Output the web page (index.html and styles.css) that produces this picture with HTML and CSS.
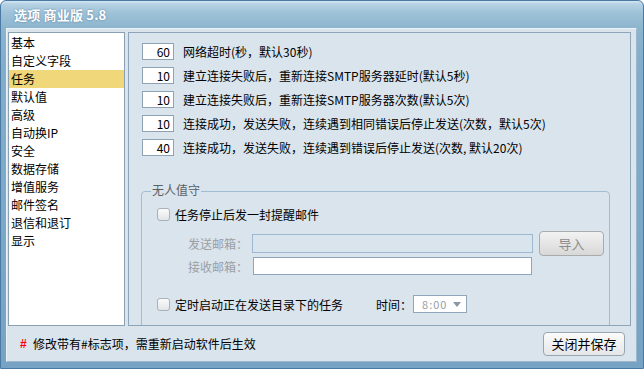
FILE: index.html
```html
<!DOCTYPE html>
<html lang="zh-CN">
<head>
<meta charset="utf-8">
<title>选项 商业版 5.8</title>
<link rel="stylesheet" href="styles.css">
</head>
<body>
<div class="window">
  <div class="titlebar"><span class="title">选项 商业版 5.8</span></div>
  <div class="client">
    <div class="main">
      <ul class="nav">
        <li>基本</li>
        <li>自定义字段</li>
        <li class="selected">任务</li>
        <li>默认值</li>
        <li>高级</li>
        <li>自动换IP</li>
        <li>安全</li>
        <li>数据存储</li>
        <li>增值服务</li>
        <li>邮件签名</li>
        <li>退信和退订</li>
        <li>显示</li>
      </ul>
      <div class="panel">
        <div class="rows">
          <div class="row"><span class="num">60</span><span class="lbl">网络超时(秒，默认30秒)</span></div>
          <div class="row"><span class="num">10</span><span class="lbl">建立连接失败后，重新连接SMTP服务器延时(默认5秒)</span></div>
          <div class="row"><span class="num">10</span><span class="lbl">建立连接失败后，重新连接SMTP服务器次数(默认5次)</span></div>
          <div class="row"><span class="num">10</span><span class="lbl">连接成功，发送失败，连续遇到相同错误后停止发送(次数，默认5次)</span></div>
          <div class="row"><span class="num">40</span><span class="lbl">连接成功，发送失败，连续遇到错误后停止发送(次数, 默认20次)</span></div>
        </div>
        <div class="group">
          <span class="group-title">无人值守</span>
          <div class="check-row"><span class="check"></span><span>任务停止后发一封提醒邮件</span></div>
          <div class="mail-grid">
            <span class="muted">发送邮箱：</span>
            <span class="field field-disabled"></span>
            <span class="btn btn-disabled">导入</span>
            <span class="muted">接收邮箱：</span>
            <span class="field field-white"></span>
            <span></span>
          </div>
          <div class="check-row check-row-2">
            <span class="check"></span><span>定时启动正在发送目录下的任务</span>
            <span class="time-label">时间：</span>
            <span class="select"><span class="select-val">8:00</span><span class="arrow"></span></span>
          </div>
        </div>
      </div>
    </div>
    <div class="footer">
      <span class="hash">#</span>
      <span class="hint">修改带有#标志项，需重新启动软件后生效</span>
      <span class="btn btn-save">关闭并保存</span>
    </div>
  </div>
</div>
</body>
</html>
```

FILE: styles.css
```css
* { box-sizing: border-box; }
html, body { margin: 0; padding: 0; background: #ffffff; }
body {
  font-family: "Noto Sans CJK SC", "Liberation Sans", sans-serif;
  font-size: 12px;
  color: #000;
}
.window {
  width: 644px;
  height: 369px;
  border: 1px solid #4a7aa4;
  border-radius: 6px 6px 0 0;
  background: linear-gradient(to bottom, #d4e6f2 0, #b6d2e4 3px, #9ec2d8 12px, #8cb5ce 27px, #82aecb 60px, #76a3c4 100%);
  padding: 0 6px 6px 5px;
  display: flex;
  flex-direction: column;
}
.titlebar {
  height: 27px;
  flex: none;
  display: flex;
  align-items: center;
  padding-left: 8px;
}
.title {
  color: #ffffff;
  font-weight: bold;
  font-size: 13px;
  letter-spacing: 0.2px;
  text-shadow: 0 0 2px rgba(40, 80, 120, 0.6);
}
.client {
  flex: 1;
  background: #dae4ed;
  border-left: 1px solid #eef3f8;
  border-top: 1px solid #eef3f8;
  border-right: 1px solid #9db6cb;
  border-bottom: 1px solid #9db6cb;
  padding: 3px 5px 0 1px;
  display: flex;
  flex-direction: column;
}
.main {
  height: 294px;
  flex: none;
  display: flex;
  gap: 3px;
}
.nav {
  list-style: none;
  margin: 0;
  padding: 1px 0 0 0;
  width: 117px;
  background: #ffffff;
  border: 1px solid #8aa0b5;
}
.nav li {
  height: 18px;
  line-height: 18px;
  padding-left: 2px;
  white-space: nowrap;
}
.nav li.selected {
  background: #f0d779;
}
.panel {
  width: 503px;
  border: 1px solid #8ea4b8;
  overflow: hidden;
  padding: 10px 0 0 13px;
}
.rows {
  display: flex;
  flex-direction: column;
  gap: 7px;
}
.row {
  display: flex;
  align-items: center;
  height: 17px;
}
.num {
  width: 32px;
  height: 17px;
  flex: none;
  background: #ffffff;
  border: 1px solid #8fa2b4;
  text-align: right;
  padding-right: 3px;
  line-height: 15px;
}
.lbl {
  margin-left: 9px;
  white-space: nowrap;
  line-height: 17px;
}
.group {
  position: relative;
  margin-top: 35px;
  width: 469px;
  margin-left: -1px;
  border: 1px solid #a2bcd2;
  border-radius: 4px;
  padding: 16px 0 30px 15px;
}
.group-title {
  position: absolute;
  top: -10px;
  left: 9px;
  padding: 0 1px;
  background: #dae4ed;
  color: #5a5f66;
  line-height: 16px;
}
.check-row {
  display: flex;
  align-items: center;
  height: 13px;
  white-space: nowrap;
}
.check {
  width: 13px;
  height: 13px;
  flex: none;
  margin-right: 5px;
  border: 1px solid #a9b1b9;
  border-radius: 3px;
  background: linear-gradient(to bottom, #fbfbfb, #e2e4e6);
}
.mail-grid {
  margin-top: 10px;
  margin-left: 31px;
  display: grid;
  grid-template-columns: 60px 281px 65px;
  grid-template-rows: 25px 18px;
  column-gap: 4px;
  row-gap: 1px;
  align-items: center;
}
.mail-grid .btn { margin-left: 2px; }
.muted {
  color: #9a9ea4;
  white-space: nowrap;
}
.field {
  display: block;
  height: 19px;
}
.field-disabled {
  border: 1px solid #9db8d0;
  background: #dae4ed;
}
.field-white {
  height: 18px;
  margin-left: 1px;
  width: 279px;
  border: 1px solid #8ea6bb;
  background: #ffffff;
}
.btn {
  display: flex;
  align-items: center;
  justify-content: center;
  border-radius: 4px;
}
.btn-disabled {
  width: 65px;
  height: 25px;
  border: 1px solid #a9abad;
  background: linear-gradient(to bottom, #f2f2f2, #d8d8d8);
  color: #8c8c8c;
  font-size: 13px;
}
.check-row-2 {
  margin-top: 20px;
  height: 18px;
}
.time-label {
  margin-left: 33px;
  margin-right: 1px;
}
.select {
  width: 54px;
  height: 18px;
  border: 1px solid #8fa6bb;
  background: #ffffff;
  display: flex;
  align-items: center;
  justify-content: space-between;
  padding: 0 5px 0 8px;
}
.select-val {
  color: #9a9ea4;
  font-size: 11px;
  letter-spacing: 1px;
}
.arrow {
  width: 0;
  height: 0;
  border-left: 4px solid transparent;
  border-right: 4px solid transparent;
  border-top: 5px solid #8a97a4;
}
.footer {
  flex: 1;
  display: flex;
  align-items: center;
  padding-left: 12px;
}
.hash {
  color: #ff0000;
  font-weight: bold;
  font-family: "Liberation Sans", sans-serif;
  font-size: 12px;
  width: 13px;
}
.hint {
  white-space: nowrap;
}
.btn-save {
  margin-left: auto;
  margin-right: 6px;
  width: 82px;
  height: 24px;
  border: 1px solid #98a6b2;
  background: linear-gradient(to bottom, #fbfbfb, #e4e6e8);
  font-size: 13px;
}
```
